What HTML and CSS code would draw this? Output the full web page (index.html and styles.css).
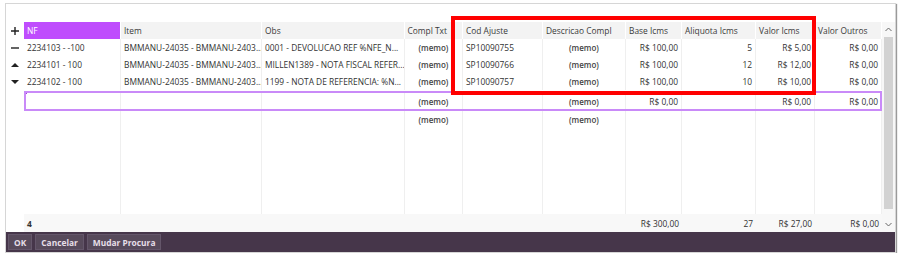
FILE: index.html
```html
<!DOCTYPE html>
<html lang="pt">
<head>
    <meta charset="UTF-8">
    <meta name="viewport" content="width=device-width, initial-scale=1.0">
    <title>Ajustes ICMS</title>
    <link rel="stylesheet" href="styles.css">
</head>
<body>
    <section class="frame">
        <div class="grid-area">
            <div class="grid">
                <div class="row head">
                    <div class="gut"><svg width="8" height="8" viewBox="0 0 8 8"><path d="M4 0v8M0 4h8" stroke="#222" stroke-width="1.4"/></svg></div>
                    <div class="cell sel">NF</div>
                    <div class="cell">Item</div>
                    <div class="cell">Obs</div>
                    <div class="cell r">Compl Txt</div>
                    <div class="cell">Cod Ajuste</div>
                    <div class="cell">Descricao Compl</div>
                    <div class="cell">Base Icms</div>
                    <div class="cell">Aliquota Icms</div>
                    <div class="cell">Valor Icms</div>
                    <div class="cell">Valor Outros</div>
                </div>

                <div class="row">
                    <div class="gut"><svg width="8" height="8" viewBox="0 0 8 8"><path d="M0 4h8" stroke="#222" stroke-width="1.4"/></svg></div>
                    <div class="cell">2234103 - -100</div>
                    <div class="cell">BMMANU-24035 - BMMANU-2403...</div>
                    <div class="cell">0001 - DEVOLUCAO REF %NFE_N...</div>
                    <div class="cell c memo">(memo)</div>
                    <div class="cell">SP10090755</div>
                    <div class="cell c memo">(memo)</div>
                    <div class="cell r">R$ 100,00</div>
                    <div class="cell r">5</div>
                    <div class="cell r">R$ 5,00</div>
                    <div class="cell r">R$ 0,00</div>
                </div>
                <div class="row">
                    <div class="gut"><svg width="8" height="8" viewBox="0 0 8 8"><path d="M0 6L4 2L8 6Z" fill="#222"/></svg></div>
                    <div class="cell">2234101 - 100</div>
                    <div class="cell">BMMANU-24035 - BMMANU-2403...</div>
                    <div class="cell">MILLEN1389 - NOTA FISCAL REFER...</div>
                    <div class="cell c memo">(memo)</div>
                    <div class="cell">SP10090766</div>
                    <div class="cell c memo">(memo)</div>
                    <div class="cell r">R$ 100,00</div>
                    <div class="cell r">12</div>
                    <div class="cell r">R$ 12,00</div>
                    <div class="cell r">R$ 0,00</div>
                </div>
                <div class="row">
                    <div class="gut"><svg width="8" height="8" viewBox="0 0 8 8"><path d="M0 2L4 6L8 2Z" fill="#222"/></svg></div>
                    <div class="cell">2234102 - 100</div>
                    <div class="cell">BMMANU-24035 - BMMANU-2403...</div>
                    <div class="cell">1199 - NOTA DE REFERENCIA: %N...</div>
                    <div class="cell c memo">(memo)</div>
                    <div class="cell">SP10090757</div>
                    <div class="cell c memo">(memo)</div>
                    <div class="cell r">R$ 100,00</div>
                    <div class="cell r">10</div>
                    <div class="cell r">R$ 10,00</div>
                    <div class="cell r">R$ 0,00</div>
                </div>

                <!-- linha nova em edicao -->
                <div class="row editing">
                    <div class="gut"></div>
                    <div class="cell"></div>
                    <div class="cell"></div>
                    <div class="cell"></div>
                    <div class="cell c memo">(memo)</div>
                    <div class="cell"></div>
                    <div class="cell c memo">(memo)</div>
                    <div class="cell r">R$ 0,00</div>
                    <div class="cell r"></div>
                    <div class="cell r">R$ 0,00</div>
                    <div class="cell r">R$ 0,00</div>
                </div>
                <div class="row">
                    <div class="gut"></div>
                    <div class="cell"></div>
                    <div class="cell"></div>
                    <div class="cell"></div>
                    <div class="cell c memo">(memo)</div>
                    <div class="cell"></div>
                    <div class="cell c memo">(memo)</div>
                    <div class="cell"></div>
                    <div class="cell"></div>
                    <div class="cell"></div>
                    <div class="cell"></div>
                </div>
                <div class="row fill">
                    <div class="gut"></div>
                    <div class="cell"></div>
                    <div class="cell"></div>
                    <div class="cell"></div>
                    <div class="cell"></div>
                    <div class="cell"></div>
                    <div class="cell"></div>
                    <div class="cell"></div>
                    <div class="cell"></div>
                    <div class="cell"></div>
                    <div class="cell"></div>
                </div>

                <div class="row foot">
                    <div class="gut"></div>
                    <div class="cell total">4</div>
                    <div class="cell"></div>
                    <div class="cell"></div>
                    <div class="cell"></div>
                    <div class="cell"></div>
                    <div class="cell"></div>
                    <div class="cell r">R$ 300,00</div>
                    <div class="cell r">27</div>
                    <div class="cell r">R$ 27,00</div>
                    <div class="cell r">R$ 0,00</div>
                </div>
            </div>

            <aside class="scroll">
                <svg class="arrow" width="7" height="5" viewBox="0 0 7 5"><path d="M0.5 4L3.5 1L6.5 4" stroke="#666" fill="none" stroke-width="1"/></svg>
                <div class="thumb"></div>
                <svg class="arrow" width="7" height="5" viewBox="0 0 7 5"><path d="M0.5 1L3.5 4L6.5 1" stroke="#666" fill="none" stroke-width="1"/></svg>
            </aside>
        </div>

        <nav class="bar">
            <button class="btn">OK</button>
            <button class="btn">Cancelar</button>
            <button class="btn">Mudar Procura</button>
        </nav>

        <div class="mark"></div>
    </section>
</body>
</html>
```

FILE: styles.css
```css
html {
  box-sizing: border-box;
  font-family: 'Open Sans', 'Noto Sans', sans-serif;
}

*,
*:before,
*:after {
  box-sizing: inherit;
}

body {
  margin: 0;
  background-color: white;
  color: #333;
  font-size: 8.4px;
}

.frame {
  position: relative;
  margin: 3px 0 0 5px;
  width: 891px;
  height: 250px;
  padding-top: 18px;
  border: 1px solid #d6d6d6;
  box-shadow: 1px 1px 1px #9a9a9a;
  display: flex;
  flex-direction: column;
  background-color: white;
}

.grid-area {
  flex: 1;
  display: flex;
  min-height: 0;
}

.grid {
  width: 876px;
  display: flex;
  flex-direction: column;
}

.row {
  display: grid;
  grid-template-columns: 18px 97px 141px 143px 58px 80px 83px 56px 74px 59px 67px;
  height: 17px;
  flex-shrink: 0;
}

.gut {
  display: flex;
  align-items: center;
  justify-content: center;
}

.cell {
  display: flex;
  align-items: center;
  padding: 0 3px;
  white-space: nowrap;
  overflow: hidden;
  border-right: 1px solid #efefef;
}

.cell.r {
  justify-content: flex-end;
}
.cell.c {
  justify-content: center;
}

.memo {
  font-weight: 600;
  color: #444;
  font-size: 8px;
}

.head .cell {
  background-color: #f3f3f3;
  border-right: 1px solid white;
  color: #3a3a3a;
}
.head .cell.r {
  padding: 0 15px 0 0;
  overflow: visible;
}
.head .cell.sel {
  background-color: #bf4dfd;
  color: white;
}

.editing {
  position: relative;
  height: 20px;
  margin-top: 1px;
}
.editing:after {
  content: "";
  position: absolute;
  left: 18px;
  right: 0;
  top: 0;
  bottom: 0;
  border: 2px solid #c98af8;
  pointer-events: none;
}
.editing .cell:nth-child(2) {
  background: linear-gradient(135deg, #a03de0 4px, transparent 4px);
}

.fill {
  flex: 1;
}

.foot {
  height: 18px;
}
.foot .cell {
  background-color: #f8f8f8;
  border-right: none;
}
.total {
  font-weight: 700;
}

.scroll {
  width: 13px;
  display: flex;
  flex-direction: column;
  align-items: center;
  background-color: #f7f7f7;
}
.scroll .arrow {
  margin: 5px 0;
}
.thumb {
  flex: 1;
  width: 9px;
  background-color: #d2d2d2;
  margin-bottom: 8px;
}

.bar {
  height: 20px;
  background-color: #46364a;
  display: flex;
  align-items: center;
  gap: 3px;
  padding: 0 2px;
}

.btn {
  font-family: inherit;
  font-size: 8.4px;
  font-weight: 700;
  color: #e6dfe8;
  background-color: #574a5b;
  border: 1px solid #64566a;
  height: 16px;
  padding: 0 5px;
  cursor: pointer;
}

.mark {
  position: absolute;
  left: 445px;
  top: 12px;
  width: 365px;
  height: 79px;
  border: 4px solid #ff0000;
  pointer-events: none;
}
```
